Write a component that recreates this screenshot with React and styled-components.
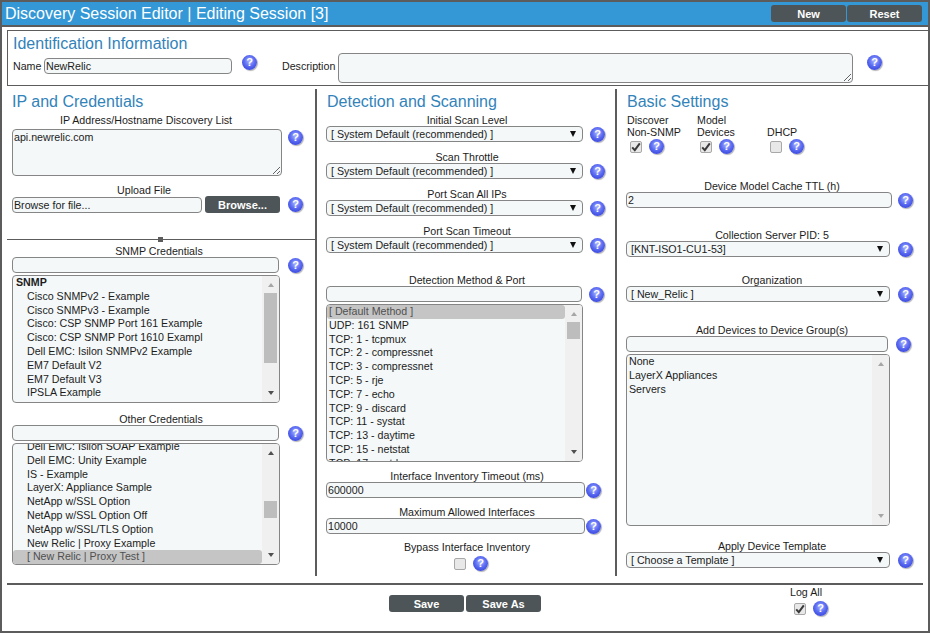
import React from 'react';
import styled, { createGlobalStyle } from 'styled-components';

const GlobalStyle = createGlobalStyle`
  html, body {
    margin: 0;
    padding: 0;
    background: #fff;
  }
  * {
    box-sizing: border-box;
  }
`;

const DARK = '#5c5c5c';
const FIELD = '#f4f8f9';

const Frame = styled.div`
  width: 930px;
  height: 633px;
  border: 2px solid ${DARK};
  background: #fff;
  font-family: "Liberation Sans", Arial, sans-serif;
  font-size: 10.67px;
  color: #1c1c1c;
  overflow: hidden;
`;

const TitleBar = styled.div`
  height: 25px;
  background: #3498d6;
  border-bottom: 2px solid ${DARK};
  display: flex;
  align-items: flex-start;
  justify-content: space-between;
  padding: 3px 6px 0 3px;
`;

const Title = styled.div`
  color: #fff;
  font-size: 16px;
  line-height: 18px;
`;

const BtnGroup = styled.div`
  display: flex;
  gap: ${p => p.$gap || 1}px;
`;

const Button = styled.button`
  flex: none;
  width: 75px;
  height: 17px;
  margin-left: ${p => p.$ml || 0}px;
  border: none;
  border-radius: 3px;
  background: #4e5558;
  color: #fff;
  font-family: inherit;
  font-size: 11px;
  font-weight: bold;
  padding: 0;
`;

const IdBox = styled.div`
  height: 56px;
  margin: 3px 0 3px 5px;
  border: 1px solid ${DARK};
  border-right: none;
  padding: 3px 0 0 5px;
`;

const Heading = styled.div`
  height: ${p => p.$h || 20}px;
  line-height: 20px;
  font-size: 16px;
  color: #3283ba;
  margin-left: ${p => p.$ml || 0}px;
`;

const IdRow = styled.div`
  display: flex;
  align-items: flex-start;
`;

const InlineLabel = styled.div`
  width: ${p => p.$w}px;
  margin-left: ${p => p.$ml || 0}px;
  margin-top: 7px;
  line-height: 12px;
  flex: none;
`;

const Input = styled.input`
  display: block;
  flex: none;
  width: ${p => p.$w}px;
  height: 16px;
  margin-top: ${p => p.$mt || 0}px;
  padding: 0 1px;
  border: 1px solid #858585;
  border-radius: 4px;
  background: ${FIELD};
  font-family: inherit;
  font-size: 10.67px;
  color: #1c1c1c;
  outline: none;
`;

const TextArea = styled.textarea`
  display: block;
  flex: none;
  width: ${p => p.$w}px;
  height: ${p => p.$h}px;
  padding: 1px;
  border: 1px solid #858585;
  border-radius: 4px;
  background: ${FIELD};
  font-family: inherit;
  font-size: 10.67px;
  line-height: 13px;
  color: #1c1c1c;
  outline: none;
  resize: vertical;
  overflow: hidden;
`;

const HelpIcon = styled.span`
  flex: none;
  width: 15px;
  height: 15px;
  margin-left: ${p => p.$ml || 0}px;
  margin-top: ${p => p.$mt || 0}px;
  border-radius: 50%;
  background: radial-gradient(circle at 50% 40%, #a9b4ff 0%, #5c6cf2 45%, #2431d0 100%);
  box-shadow: 1px 1px 1px rgba(0, 0, 0, 0.3);
  color: #fff;
  font-size: 11px;
  font-weight: bold;
  line-height: 15px;
  text-align: center;
`;

const Columns = styled.div`
  display: flex;
  height: 487px;
  margin-left: 5px;
`;

const Column = styled.div`
  width: ${p => p.$w}px;
  padding-left: ${p => p.$pad}px;
  border-right: ${p => (p.$line ? `2px solid ${DARK}` : 'none')};
  padding-top: 3px;
`;

const Label = styled.div`
  width: ${p => p.$w}px;
  height: 12px;
  line-height: 12px;
  margin-top: ${p => p.$mt || 0}px;
  text-align: center;
  white-space: nowrap;
`;

const Row = styled.div`
  display: flex;
  align-items: ${p => p.$align || 'center'};
  margin-top: ${p => p.$mt || 0}px;
  margin-left: ${p => p.$ml || 0}px;
`;

const Divider = styled.div`
  position: relative;
  height: 1px;
  margin: 26px 0 0 -5px;
  background: ${DARK};
`;

const Handle = styled.span`
  position: absolute;
  left: 151px;
  top: -2px;
  width: 5px;
  height: 5px;
  background: ${DARK};
`;

const SelectBox = styled.div`
  flex: none;
  display: flex;
  align-items: center;
  justify-content: space-between;
  width: ${p => p.$w}px;
  height: 16px;
  padding: 0 6px 0 4px;
  border: 1px solid #858585;
  border-radius: 4px;
  background: ${FIELD};
  white-space: nowrap;
`;

const Caret = styled.span`
  width: 0;
  height: 0;
  border-left: 3.5px solid transparent;
  border-right: 3.5px solid transparent;
  border-top: 6px solid #111;
`;

const ListBox = styled.div`
  display: flex;
  width: ${p => p.$w}px;
  height: ${p => p.$h}px;
  margin-top: 2px;
  border: 1px solid #858585;
  border-radius: 4px;
  background: ${FIELD};
  overflow: hidden;
`;

const Options = styled.div`
  flex: 1;
  min-width: 0;
  margin-top: ${p => p.$offset || 0}px;
`;

const Option = styled.div`
  height: 13.8px;
  line-height: 13.8px;
  padding-left: ${p => p.$indent || 2}px;
  white-space: nowrap;
  overflow: hidden;
  font-weight: ${p => (p.$bold ? 'bold' : 'normal')};
  background: ${p => (p.$selected ? '#c5c5c5' : 'transparent')};
  color: ${p => (p.$selected ? '#505050' : 'inherit')};
  border-radius: ${p => (p.$selected ? '3px' : '0')};
`;

const Track = styled.div`
  flex: none;
  width: 17px;
  display: flex;
  flex-direction: column;
  align-items: center;
  padding: 7px 0 7px;
  background: #f0f0f0;
`;

const Arrow = styled.span`
  flex: none;
  width: 0;
  height: 0;
  border-left: 3.5px solid transparent;
  border-right: 3.5px solid transparent;
  border-${p => (p.$down ? 'top' : 'bottom')}: 4px solid ${p => (p.$dim ? '#a6a6a6' : '#505050')};
  margin-top: ${p => (p.$down ? 'auto' : '0')};
`;

const Thumb = styled.span`
  flex: none;
  width: 13px;
  height: ${p => p.$h}px;
  margin-top: ${p => p.$top}px;
  background: #bdbdbd;
`;

const CheckGrid = styled.div`
  display: grid;
  grid-template-columns: repeat(3, 70px);
  margin-top: 2px;
`;

const CheckCell = styled.div`
  display: flex;
  flex-direction: column;
`;

const CheckText = styled.div`
  height: 24px;
  display: flex;
  flex-direction: column;
  justify-content: flex-end;
  line-height: 12px;
  margin-left: 1px;
`;

const CheckFace = styled.span`
  flex: none;
  display: flex;
  align-items: center;
  justify-content: center;
  width: 12px;
  height: 12px;
  margin-left: ${p => p.$ml || 0}px;
  border: 1px solid #a8a8a8;
  border-radius: 2px;
  background: #e8e8e8;
`;

const Hr = styled.div`
  width: 916px;
  height: 2px;
  margin: 7px 0 0 5px;
  background: ${DARK};
`;

const Footer = styled.div`
  display: flex;
  align-items: flex-start;
  padding-left: 387px;
`;

const LogAll = styled.div`
  width: 40px;
  margin-left: 245px;
  margin-top: 1px;
`;

function Help(props) {
  return <HelpIcon {...props}>?</HelpIcon>;
}

function CheckBox({ checked, ml }) {
  return (
    <CheckFace $ml={ml}>
      {checked && (
        <svg width="10" height="10" viewBox="0 0 10 10">
          <path d="M1.2 5.4 L3.8 8.2 L8.8 1.4" fill="none" stroke="#3a3a3a" strokeWidth="2" />
        </svg>
      )}
    </CheckFace>
  );
}

function Select({ w, value }) {
  return (
    <SelectBox $w={w}>
      <span>{value}</span>
      <Caret />
    </SelectBox>
  );
}

function List({ w, h, offset, thumbTop, thumbH, upDim, downDim, children }) {
  return (
    <ListBox $w={w} $h={h}>
      <Options $offset={offset}>{children}</Options>
      <Track>
        <Arrow $dim={upDim} />
        {thumbH && <Thumb $top={thumbTop} $h={thumbH} />}
        <Arrow $down $dim={downDim} />
      </Track>
    </ListBox>
  );
}

const snmpItems = [
  'Cisco SNMPv2 - Example',
  'Cisco SNMPv3 - Example',
  'Cisco: CSP SNMP Port 161 Example',
  'Cisco: CSP SNMP Port 1610 Exampl',
  'Dell EMC: Isilon SNMPv2 Example',
  'EM7 Default V2',
  'EM7 Default V3',
  'IPSLA Example',
];

const otherItems = [
  'Dell EMC: Isilon SOAP Example',
  'Dell EMC: Unity Example',
  'IS - Example',
  'LayerX: Appliance Sample',
  'NetApp w/SSL Option',
  'NetApp w/SSL Option Off',
  'NetApp w/SSL/TLS Option',
  'New Relic | Proxy Example',
];

const methods = [
  'UDP: 161 SNMP',
  'TCP: 1 - tcpmux',
  'TCP: 2 - compressnet',
  'TCP: 3 - compressnet',
  'TCP: 5 - rje',
  'TCP: 7 - echo',
  'TCP: 9 - discard',
  'TCP: 11 - systat',
  'TCP: 13 - daytime',
  'TCP: 15 - netstat',
  'TCP: 17 - qotd',
];

const scanFields = [
  { label: 'Initial Scan Level', mt: 2 },
  { label: 'Scan Throttle', mt: 9 },
  { label: 'Port Scan All IPs', mt: 9 },
  { label: 'Port Scan Timeout', mt: 9 },
];

export default function App() {
  return (
    <Frame>
      <GlobalStyle />
      <TitleBar>
        <Title>Discovery Session Editor | Editing Session [3]</Title>
        <BtnGroup>
          <Button>New</Button>
          <Button>Reset</Button>
        </BtnGroup>
      </TitleBar>

      <IdBox>
        <Heading $h={19}>Identification Information</Heading>
        <IdRow>
          <InlineLabel $w={31}>Name</InlineLabel>
          <Input $w={188} $mt={5} value="NewRelic" readOnly />
          <Help $ml={10} $mt={2} />
          <InlineLabel $w={56} $ml={25}>Description</InlineLabel>
          <TextArea $w={515} $h={30} readOnly />
          <Help $ml={14} $mt={2} />
        </IdRow>
      </IdBox>

      {/* three setting columns */}
      <Columns>
        <Column $w={310} $pad={5} $line>
          <Heading>IP and Credentials</Heading>
          <Label $w={268} $mt={2}>IP Address/Hostname Discovery List</Label>
          <Row $mt={3} $align="flex-start">
            <TextArea $w={270} $h={47} value="api.newrelic.com" readOnly />
            <Help $ml={6} $mt={1} />
          </Row>
          <Label $w={264} $mt={8}>Upload File</Label>
          <Row>
            <Input $w={190} value="Browse for file..." readOnly />
            <Button $ml={3}>Browse...</Button>
            <Help $ml={8} />
          </Row>
          <Divider>
            <Handle />
          </Divider>
          <Label $w={294} $mt={5}>SNMP Credentials</Label>
          <Row>
            <Input $w={267} />
            <Help $ml={9} />
          </Row>
          <List w={268} h={128} thumbTop={6} thumbH={70} upDim>
            <Option $bold $indent={3}>SNMP</Option>
            {snmpItems.map((item, index) => (
              <Option key={index} $indent={14}>{item}</Option>
            ))}
          </List>
          <Label $w={298} $mt={10}>Other Credentials</Label>
          <Row>
            <Input $w={267} />
            <Help $ml={9} />
          </Row>
          <List w={268} h={122} offset={-4} thumbTop={46} thumbH={17}>
            {otherItems.map((item, index) => (
              <Option key={index} $indent={14}>{item}</Option>
            ))}
            <Option $indent={14} $selected>[ New Relic | Proxy Test ]</Option>
          </List>
        </Column>

        <Column $w={300} $pad={9} $line>
          <Heading $ml={1}>Detection and Scanning</Heading>
          {scanFields.map(field => (
            <React.Fragment key={field.label}>
              <Label $w={282} $mt={field.mt}>{field.label}</Label>
              <Row>
                <Select w={257} value="[ System Default (recommended) ]" />
                <Help $ml={7} />
              </Row>
            </React.Fragment>
          ))}
          <Label $w={282} $mt={21}>Detection Method &amp; Port</Label>
          <Row>
            <Input $w={256} />
            <Help $ml={7} />
          </Row>
          <List w={257} h={158} thumbTop={6} thumbH={17} upDim>
            <Option $selected>[ Default Method ]</Option>
            {methods.map((item, index) => (
              <Option key={index}>{item}</Option>
            ))}
          </List>
          <Label $w={282} $mt={8}>Interface Inventory Timeout (ms)</Label>
          <Row>
            <Input $w={259} value="600000" readOnly />
            <Help $ml={1} />
          </Row>
          <Label $w={282} $mt={8}>Maximum Allowed Interfaces</Label>
          <Row>
            <Input $w={259} value="10000" readOnly />
            <Help $ml={1} />
          </Row>
          <Label $w={282} $mt={7}>Bypass Interface Inventory</Label>
          <Row $ml={128} $mt={3}>
            <CheckBox />
            <Help $ml={7} />
          </Row>
        </Column>

        <Column $w={306} $pad={9}>
          <Heading $ml={1}>Basic Settings</Heading>
          <CheckGrid>
            <CheckCell>
              <CheckText><span>Discover</span><span>Non-SNMP</span></CheckText>
              <Row $mt={1}>
                <CheckBox checked ml={4} />
                <Help $ml={7} />
              </Row>
            </CheckCell>
            <CheckCell>
              <CheckText><span>Model</span><span>Devices</span></CheckText>
              <Row $mt={1}>
                <CheckBox checked ml={4} />
                <Help $ml={7} />
              </Row>
            </CheckCell>
            <CheckCell>
              <CheckText><span>DHCP</span></CheckText>
              <Row $mt={1}>
                <CheckBox ml={4} />
                <Help $ml={7} />
              </Row>
            </CheckCell>
          </CheckGrid>
          <Label $w={292} $mt={26}>Device Model Cache TTL (h)</Label>
          <Row>
            <Input $w={266} value="2" readOnly />
            <Help $ml={6} />
          </Row>
          <Label $w={292} $mt={21}>Collection Server PID: 5</Label>
          <Row>
            <Select w={264} value="[KNT-ISO1-CU1-53]" />
            <Help $ml={8} />
          </Row>
          <Label $w={292} $mt={17}>Organization</Label>
          <Row>
            <Select w={264} value="[ New_Relic ]" />
            <Help $ml={8} />
          </Row>
          <Label $w={292} $mt={22}>Add Devices to Device Group(s)</Label>
          <Row>
            <Input $w={262} />
            <Help $ml={8} />
          </Row>
          <List w={264} h={172} upDim downDim>
            <Option>None</Option>
            <Option>LayerX Appliances</Option>
            <Option>Servers</Option>
          </List>
          <Label $w={292} $mt={14}>Apply Device Template</Label>
          <Row>
            <Select w={264} value="[ Choose a Template ]" />
            <Help $ml={8} />
          </Row>
        </Column>
      </Columns>

      <Hr />
      <Footer>
        <Row $mt={10}>
          <BtnGroup $gap={2}>
            <Button>Save</Button>
            <Button>Save As</Button>
          </BtnGroup>
        </Row>
        <LogAll>
          <Label $w={40}>Log All</Label>
          <Row $mt={3} $ml={8}>
            <CheckBox checked />
            <Help $ml={7} />
          </Row>
        </LogAll>
      </Footer>
    </Frame>
  );
}
